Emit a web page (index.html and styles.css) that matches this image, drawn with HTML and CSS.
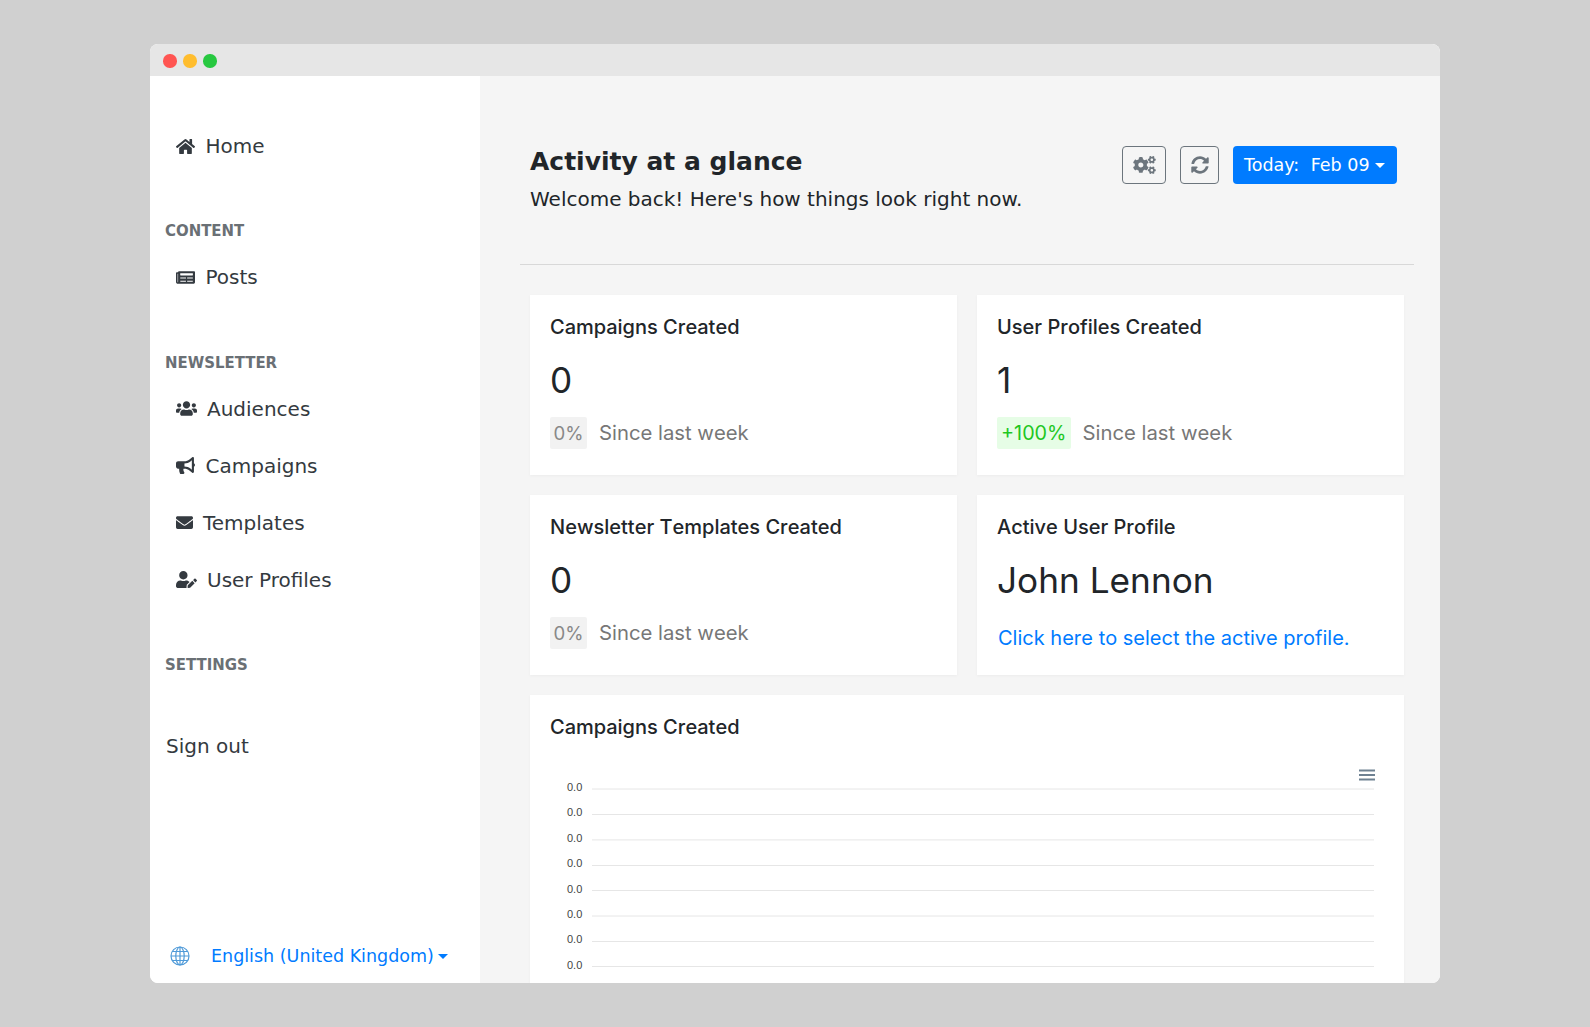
FILE: index.html
```html
<!DOCTYPE html>
<html lang="en">
<head>
<meta charset="utf-8">
<title>Activity at a glance</title>
<link rel="stylesheet" href="styles.css">
</head>
<body>
<div class="window">
  <div class="titlebar">
    <span class="dot dot-red"></span><span class="dot dot-yellow"></span><span class="dot dot-green"></span>
  </div>
  <div class="app">
    <aside class="sidebar">
      <a class="nav-item nav-home"><svg class="icon i-home" viewBox="0 0 576 512"><path d="M280.37 148.26L96 300.11V464a16 16 0 0 0 16 16l112.06-.29a16 16 0 0 0 15.92-16V368a16 16 0 0 1 16-16h64a16 16 0 0 1 16 16v95.64a16 16 0 0 0 16 16.05L464 480a16 16 0 0 0 16-16V300L295.67 148.26a12.19 12.19 0 0 0-15.3 0zM571.6 251.47L488 182.56V44.05a12 12 0 0 0-12-12h-56a12 12 0 0 0-12 12v72.61L318.47 43a48 48 0 0 0-61 0L4.34 251.47a12 12 0 0 0-1.6 16.9l25.5 31A12 12 0 0 0 45.15 301l235.22-193.74a12.19 12.19 0 0 1 15.3 0L530.9 301a12 12 0 0 0 16.9-1.6l25.5-31a12 12 0 0 0-1.7-16.93z"/></svg><span>Home</span></a>
      <h6 class="section section-content">CONTENT</h6>
      <a class="nav-item"><svg class="icon i-home" viewBox="0 0 576 512"><path d="M552 64H88c-13.255 0-24 10.745-24 24v8H24c-13.255 0-24 10.745-24 24v272c0 30.928 25.072 56 56 56h472c26.51 0 48-21.49 48-48V88c0-13.255-10.745-24-24-24zM56 400a8 8 0 0 1-8-8V144h16v248a8 8 0 0 1-8 8zm236-16H140c-6.627 0-12-5.373-12-12v-8c0-6.627 5.373-12 12-12h152c6.627 0 12 5.373 12 12v8c0 6.627-5.373 12-12 12zm208 0H348c-6.627 0-12-5.373-12-12v-8c0-6.627 5.373-12 12-12h152c6.627 0 12 5.373 12 12v8c0 6.627-5.373 12-12 12zm-208-96H140c-6.627 0-12-5.373-12-12v-8c0-6.627 5.373-12 12-12h152c6.627 0 12 5.373 12 12v8c0 6.627-5.373 12-12 12zm208 0H348c-6.627 0-12-5.373-12-12v-8c0-6.627 5.373-12 12-12h152c6.627 0 12 5.373 12 12v8c0 6.627-5.373 12-12 12zm0-96H140c-6.627 0-12-5.373-12-12v-40c0-6.627 5.373-12 12-12h360c6.627 0 12 5.373 12 12v40c0 6.627-5.373 12-12 12z"/></svg><span>Posts</span></a>
      <h6 class="section section-news">NEWSLETTER</h6>
      <a class="nav-item"><svg class="icon i-wide" viewBox="0 0 640 512"><path d="M96 224c35.3 0 64-28.7 64-64s-28.7-64-64-64-64 28.7-64 64 28.7 64 64 64zm448 0c35.3 0 64-28.7 64-64s-28.7-64-64-64-64 28.7-64 64 28.7 64 64 64zm32 32h-64c-17.6 0-33.5 7.1-45.1 18.6 40.3 22.1 68.9 62 75.1 109.4h66c17.7 0 32-14.3 32-32v-32c0-35.3-28.7-64-64-64zm-256 0c61.9 0 112-50.1 112-112S381.9 32 320 32 208 82.1 208 144s50.1 112 112 112zm76.8 32h-8.3c-20.8 10-43.9 16-68.5 16s-47.6-6-68.5-16h-8.3C179.6 288 128 339.6 128 403.2V432c0 26.5 21.5 48 48 48h288c26.5 0 48-21.5 48-48v-28.8c0-63.6-51.6-115.2-115.2-115.2zm-223.7-13.4C161.5 263.1 145.6 256 128 256H64c-35.3 0-64 28.7-64 64v32c0 17.7 14.3 32 32 32h65.9c6.3-47.4 34.9-87.3 75.2-109.4z"/></svg><span>Audiences</span></a>
      <a class="nav-item"><svg class="icon i-home" viewBox="0 0 576 512"><path d="M576 240c0-23.63-12.95-44.04-32-55.12V32.01C544 23.26 537.02 0 512 0c-7.12 0-14.19 2.38-19.98 7.02l-85.03 68.03C364.28 109.19 310.66 128 256 128H64c-35.35 0-64 28.65-64 64v96c0 35.35 28.65 64 64 64h33.7c-1.39 10.48-2.18 21.14-2.18 32 0 39.77 9.26 77.35 25.56 110.94 5.19 10.69 16.52 17.06 28.4 17.06h74.28c26.05 0 41.69-29.84 25.9-50.56-16.4-21.52-26.15-48.36-26.15-77.44 0-11.11 1.62-21.79 4.41-32H256c54.66 0 108.28 18.81 150.98 52.95l85.03 68.03a32.023 32.023 0 0 0 19.98 7.02c24.92 0 32-22.78 32-32V295.13C563.05 284.04 576 263.63 576 240zm-96 141.42l-33.05-26.44C392.95 311.78 325.12 288 256 288v-96c69.12 0 136.95-23.78 190.95-66.98L480 98.58v282.84z"/></svg><span>Campaigns</span></a>
      <a class="nav-item"><svg class="icon i-narrow" viewBox="0 0 512 512"><path d="M502.3 190.8c3.9-3.1 9.7-.2 9.7 4.7V400c0 26.5-21.5 48-48 48H48c-26.5 0-48-21.5-48-48V195.6c0-5 5.7-7.8 9.7-4.7 22.4 17.4 52.1 39.5 154.1 113.6 21.1 15.4 56.7 47.8 92.2 47.6 35.7.3 72-32.8 92.3-47.6 102-74.1 131.6-96.3 154-113.7zM256 320c23.2.4 56.6-29.2 73.4-41.4 132.7-96.3 142.8-104.7 173.4-128.7 5.8-4.5 9.2-11.5 9.2-18.9v-19c0-26.5-21.5-48-48-48H48C21.5 64 0 85.5 0 112v19c0 7.4 3.4 14.3 9.2 18.9 30.6 23.9 40.7 32.4 173.4 128.7 16.8 12.2 50.2 41.8 73.4 41.4z"/></svg><span>Templates</span></a>
      <a class="nav-item"><svg class="icon i-wide" viewBox="0 0 640 512"><path d="M224 256c70.7 0 128-57.3 128-128S294.7 0 224 0 96 57.3 96 128s57.3 128 128 128zm89.6 32h-16.7c-22.2 10.2-46.9 16-72.9 16s-50.6-5.8-72.9-16h-16.7C60.2 288 0 348.2 0 422.4V464c0 26.5 21.5 48 48 48h274.9c-2.4-6.8-3.4-14-2.6-21.3l6.8-60.9 1.2-11.1 7.9-7.9 77.3-77.3c-24.5-27.7-60-45.5-99.9-45.5zm45.3 145.3l-6.8 61c-1.1 10.2 7.5 18.8 17.6 17.6l60.9-6.8 137.9-137.9-71.7-71.7-137.9 137.8zM633 268.9L595.1 231c-9.3-9.3-24.5-9.3-33.8 0l-37.8 37.8-4.1 4.1 71.8 71.7 41.8-41.8c9.3-9.4 9.3-24.5 0-33.9z"/></svg><span>User Profiles</span></a>
      <h6 class="section section-settings">SETTINGS</h6>
      <a class="signout">Sign out</a>
      <div class="language">
        <svg class="globe" viewBox="0 0 20 20"><circle cx="10" cy="10" r="9"/><ellipse cx="10" cy="10" rx="4.2" ry="9"/><path d="M10 1v18M1 10h18M2.4 5.5h15.2M2.4 14.5h15.2"/></svg>
        <a class="lang-link">English (United Kingdom)</a><span class="caret caret-lang"></span>
      </div>
    </aside>
    <main class="main">
      <header class="page-head">
        <div class="page-title">
          <h1>Activity at a glance</h1>
          <p>Welcome back! Here's how things look right now.</p>
        </div>
        <div class="actions">
          <button class="btn-outline btn-cogs"><svg viewBox="0 0 640 512"><path d="M512.1 191l-8.2 14.3c-3 5.3-9.4 7.5-15.1 5.4-11.8-4.4-22.6-10.7-32.1-18.6-4.6-3.8-5.8-10.5-2.8-15.7l8.2-14.3c-6.9-8-12.3-17.3-15.9-27.4h-16.5c-6 0-11.2-4.3-12.2-10.3-2-12-2.1-24.6 0-37.1 1-6 6.2-10.4 12.2-10.4h16.5c3.6-10.1 9-19.4 15.9-27.4l-8.2-14.3c-3-5.2-1.9-11.9 2.8-15.7 9.5-7.9 20.4-14.2 32.1-18.6 5.7-2.1 12.1.1 15.1 5.4l8.2 14.3c10.5-1.9 21.2-1.9 31.7 0L552 6.3c3-5.3 9.4-7.5 15.1-5.4 11.8 4.4 22.6 10.7 32.1 18.6 4.6 3.8 5.8 10.5 2.8 15.7l-8.2 14.3c6.9 8 12.3 17.3 15.9 27.4h16.5c6 0 11.2 4.3 12.2 10.3 2 12 2.1 24.6 0 37.1-1 6-6.2 10.4-12.2 10.4h-16.5c-3.6 10.1-9 19.4-15.9 27.4l8.2 14.3c3 5.2 1.9 11.9-2.8 15.7-9.5 7.9-20.4 14.2-32.1 18.6-5.7 2.1-12.1-.1-15.1-5.4l-8.2-14.3c-10.4 1.9-21.2 1.9-31.7 0zm-10.5-58.8c38.5 29.6 82.4-14.3 52.8-52.8-38.5-29.7-82.4 14.3-52.8 52.8zM386.3 286.1l33.7 16.8c10.1 5.8 14.5 18.1 10.5 29.1-8.9 24.2-26.4 46.4-42.6 65.8-7.4 8.9-20.2 11.1-30.3 5.3l-29.1-16.8c-16 13.7-34.6 24.6-54.9 31.7v33.6c0 11.6-8.3 21.6-19.7 23.6-24.6 4.2-50.4 4.4-75.9 0-11.5-2-20-11.9-20-23.6V418c-20.3-7.2-38.9-18-54.9-31.7L74 403c-10 5.8-22.9 3.6-30.3-5.3-16.2-19.4-33.3-41.6-42.2-65.7-4-10.9.4-23.2 10.5-29.1l33.3-16.8c-3.9-20.9-3.9-42.4 0-63.4L12 205.8c-10.1-5.8-14.6-18.1-10.5-29 8.9-24.2 26-46.4 42.2-65.8 7.4-8.9 20.2-11.1 30.3-5.3l29.1 16.8c16-13.7 34.6-24.6 54.9-31.7V57.1c0-11.5 8.2-21.5 19.6-23.5 24.6-4.2 50.5-4.4 76-.1 11.5 2 20 11.9 20 23.6v33.6c20.3 7.2 38.9 18 54.9 31.7l29.1-16.8c10-5.8 22.9-3.6 30.3 5.3 16.2 19.4 33.2 41.6 42.1 65.8 4 10.9.1 23.2-10 29.1l-33.7 16.8c3.9 21 3.9 42.5 0 63.5zm-117.6 21.1c59.2-77-28.7-164.9-105.7-105.7-59.2 77 28.7 164.9 105.7 105.7zm243.4 182.7l-8.2 14.3c-3 5.3-9.4 7.5-15.1 5.4-11.8-4.4-22.6-10.7-32.1-18.6-4.6-3.8-5.8-10.5-2.8-15.7l8.2-14.3c-6.9-8-12.3-17.3-15.9-27.4h-16.5c-6 0-11.2-4.3-12.2-10.3-2-12-2.1-24.6 0-37.1 1-6 6.2-10.4 12.2-10.4h16.5c3.6-10.1 9-19.4 15.9-27.4l-8.2-14.3c-3-5.2-1.9-11.9 2.8-15.7 9.5-7.9 20.4-14.2 32.1-18.6 5.7-2.1 12.1.1 15.1 5.4l8.2 14.3c10.5-1.9 21.2-1.9 31.7 0l8.2-14.3c3-5.3 9.4-7.5 15.1-5.4 11.8 4.4 22.6 10.7 32.1 18.6 4.6 3.8 5.8 10.5 2.8 15.7l-8.2 14.3c6.9 8 12.3 17.3 15.9 27.4h16.5c6 0 11.2 4.3 12.2 10.3 2 12 2.1 24.6 0 37.1-1 6-6.2 10.4-12.2 10.4h-16.5c-3.6 10.1-9 19.4-15.9 27.4l8.2 14.3c3 5.2 1.9 11.9-2.8 15.7-9.5 7.9-20.4 14.2-32.1 18.6-5.7 2.1-12.1-.1-15.1-5.4l-8.2-14.3c-10.4 1.9-21.2 1.9-31.7 0zM501.6 431c38.5 29.6 82.4-14.3 52.8-52.8-38.5-29.6-82.4 14.3-52.8 52.8z"/></svg></button>
          <button class="btn-outline btn-sync"><svg viewBox="0 0 512 512"><path d="M370.72 133.28C339.458 104.008 298.888 87.962 255.848 88c-77.458.068-144.328 53.178-162.791 126.85-1.344 5.363-6.122 9.15-11.651 9.15H24.103c-7.498 0-13.194-6.807-11.807-14.176C33.933 94.924 134.813 8 256 8c66.448 0 126.791 26.136 171.315 68.685L463.03 40.97C478.149 25.851 504 36.559 504 57.941V192c0 13.255-10.745 24-24 24H345.941c-21.382 0-32.09-25.851-16.971-40.971l41.75-41.749zM32 296h134.059c21.382 0 32.09 25.851 16.971 40.971l-41.75 41.75c31.262 29.273 71.835 45.319 114.876 45.28 77.418-.07 144.315-53.144 162.787-126.849 1.344-5.363 6.122-9.15 11.651-9.15h57.304c7.498 0 13.194 6.807 11.807 14.176C478.067 417.076 377.187 504 256 504c-66.448 0-126.791-26.136-171.315-68.685L48.97 471.03C33.851 486.149 8 475.441 8 454.059V320c0-13.255 10.745-24 24-24z"/></svg></button>
          <button class="btn-primary"><span class="today">Today:</span><span>Feb 09</span><span class="caret caret-btn"></span></button>
        </div>
      </header>
      <hr class="divider">
      <section class="cards">
        <article class="card">
          <h5>Campaigns Created</h5>
          <div class="value">0</div>
          <div class="delta"><span class="badge badge-muted">0%</span><span class="since">Since last week</span></div>
        </article>
        <article class="card">
          <h5>User Profiles Created</h5>
          <div class="value">1</div>
          <div class="delta"><span class="badge badge-up">+100%</span><span class="since">Since last week</span></div>
        </article>
        <article class="card">
          <h5>Newsletter Templates Created</h5>
          <div class="value">0</div>
          <div class="delta"><span class="badge badge-muted">0%</span><span class="since">Since last week</span></div>
        </article>
        <article class="card">
          <h5>Active User Profile</h5>
          <div class="value">John Lennon</div>
          <a class="profile-link">Click here to select the active profile.</a>
        </article>
        <article class="card card-chart">
          <h5>Campaigns Created</h5>
          <svg class="chart" viewBox="0 0 862 240">
            <g class="grid">
              <path d="M62 46H844M62 71.5H844M62 96.9H844M62 122.5H844M62 147.5H844M62 173H844M62 198.5H844M62 223.5H844"/>
            </g>
            <g class="ticks">
              <text x="37" y="48">0.0</text><text x="37" y="73">0.0</text><text x="37" y="99">0.0</text><text x="37" y="124">0.0</text><text x="37" y="150">0.0</text><text x="37" y="175">0.0</text><text x="37" y="200">0.0</text><text x="37" y="226">0.0</text>
            </g>
            <path class="burger" d="M829 27.5H845M829 32H845M829 36.5H845"/>
          </svg>
        </article>
      </section>
    </main>
  </div>
</div>
</body>
</html>
```
FILE: styles.css
```css
* { box-sizing: border-box; }
html, body { height: 100%; }
body {
  margin: 0;
  background: #d0d0d0;
  font-family: "DejaVu Sans", sans-serif;
  color: #212529;
  overflow: hidden;
  padding: 44px 150px;
}
.window {
  width: 1290px;
  height: 939px;
  border-radius: 8px;
  overflow: hidden;
  display: flex;
  flex-direction: column;
  background: #fff;
}
.titlebar {
  height: 32px;
  flex: none;
  background: #e6e6e6;
  display: flex;
  align-items: center;
  gap: 6.6px;
  padding: 2px 0 0 13.3px;
}
.dot { width: 13.4px; height: 13.4px; border-radius: 50%; }
.dot-red { background: #ff5552; }
.dot-yellow { background: #ffbd2e; }
.dot-green { background: #27c840; }
.app { flex: 1; display: flex; min-height: 0; }
.sidebar {
  width: 330px;
  flex: none;
  background: #fff;
  position: relative;
  padding: 55px 0 0 15px;
  display: flex;
  flex-direction: column;
}
.nav-item {
  display: flex;
  align-items: center;
  height: 57px;
  padding-left: 11px;
  font-size: 20px;
  color: #343a40;
}
.nav-home { height: 30px; }
.icon { fill: #343a40; height: 17px; flex: none; }
.i-home { width: 19px; margin-right: 10.5px; }
.i-wide { width: 21px; margin-right: 10px; }
.i-narrow { width: 17px; margin-right: 10px; }
.section {
  margin: 0;
  font: 700 16.6px/20px "DejaVu Sans Condensed", "DejaVu Sans", sans-serif;
  font-stretch: condensed;
  color: #6a7075;
}
.section-content { margin-top: 60px; margin-bottom: 21px; }
.section-content + .nav-item { height: 30px; }
.section-news { margin-top: 61px; margin-bottom: 7px; }
.section-settings { margin-top: 47px; }
.signout { margin-top: 59px; margin-left: 1px; font-size: 20px; color: #343a40; }
.language {
  position: absolute;
  left: 20px;
  bottom: 17px;
  display: flex;
  align-items: center;
  color: #007bff;
  font-size: 17.5px;
}
.globe { width: 20px; height: 20px; fill: none; stroke: #4f9ad8; stroke-width: 1.2; margin-right: 21px; }
.caret {
  display: inline-block;
  border-top: 5.4px solid currentColor;
  border-left: 5.4px solid transparent;
  border-right: 5.4px solid transparent;
}
.caret-lang { margin-left: 4px; }
.main {
  flex: 1;
  background: #f5f5f5;
  padding: 70px 26px 0 40px;
  min-width: 0;
  overflow: hidden;
}
.page-head {
  display: flex;
  justify-content: space-between;
  padding: 0 17px 0 10px;
  height: 118px;
}
.page-title h1 { margin: 0; font-size: 25px; line-height: 32px; font-weight: 700; }
.page-title p { margin: 6px 0 0; font-size: 20px; line-height: 30px; }
.actions { display: flex; align-items: flex-start; }
.btn-outline {
  height: 38px;
  background: transparent;
  border: 1px solid #6c757d;
  border-radius: 4px;
  padding: 0;
  display: flex;
  align-items: center;
  justify-content: center;
}
.btn-outline svg { fill: #6c757d; height: 18px; }
.btn-cogs { width: 44px; margin-right: 14px; }
.btn-cogs svg { width: 23px; }
.btn-sync { width: 39px; margin-right: 14px; }
.btn-sync svg { width: 18px; }
.btn-primary {
  height: 38px;
  width: 164px;
  border: 0;
  border-radius: 4px;
  background: #007bff;
  color: #fff;
  font: 17.5px "DejaVu Sans", sans-serif;
  display: flex;
  align-items: center;
  padding: 0 0 0 11px;
}
.today { margin-right: 11.5px; }
.caret-btn { margin-left: 5px; }
.divider { margin: 0; border: 0; border-top: 1px solid #d8d8d8; }
.cards {
  display: grid;
  grid-template-columns: 427px 427px;
  column-gap: 20px;
  row-gap: 20px;
  margin: 30px 10px 0;
}
.card {
  background: #fff;
  height: 180px;
  padding: 20px;
  box-shadow: 0 1px 3px rgba(0,0,0,.04);
  font-family: Inter, sans-serif;
  font-kerning: none;
}
.card h5 { margin: 0; font-size: 20px; line-height: 24px; font-weight: 500; color: #212529; }
.value { margin-top: 19px; font-size: 35.2px; line-height: 44px; color: #212529; }
.delta { margin-top: 15px; display: flex; align-items: center; }
.badge {
  height: 32px;
  padding: 0 4px;
  display: flex;
  align-items: center;
  border-radius: 2px;
}
.badge-muted { background: #f2f2f2; color: #888; font-size: 18.6px; padding: 0 3.5px; }
.badge-up { background: #e6fde6; color: #1fc71f; font-size: 19.8px; }
.since { margin-left: 12px; font-size: 20.3px; line-height: 30px; color: #777; }
.profile-link { display: block; margin: 24px 0 0 1px; font-size: 20px; color: #007bff; }
.card-chart { grid-column: 1 / -1; height: 320px; }
.chart { display: block; width: 862px; height: 240px; margin: 4px -20px 0; }
.grid path { stroke: #e6e6e6; stroke-width: 1; fill: none; }
.ticks text { font: 11px "Liberation Sans", sans-serif; fill: #444; }
.burger { stroke: #6e8192; stroke-width: 2; fill: none; }
```
